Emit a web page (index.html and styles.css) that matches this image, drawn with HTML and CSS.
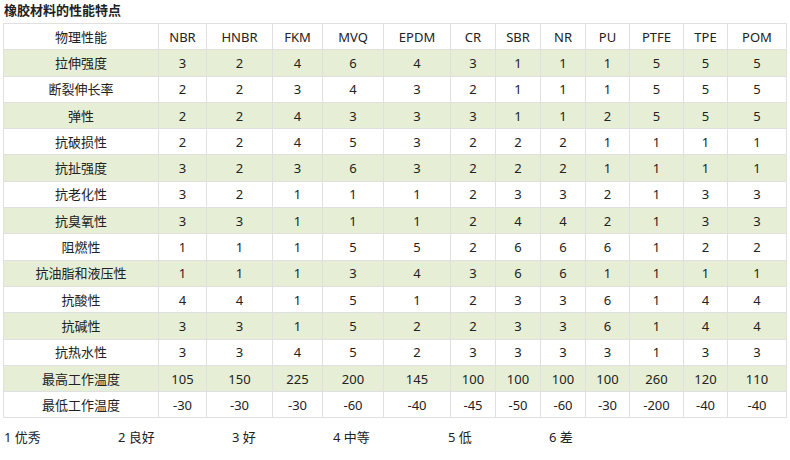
FILE: index.html
```html
<!DOCTYPE html>
<html lang="zh">
<head>
<meta charset="utf-8">
<title>橡胶材料的性能特点</title>
<link rel="stylesheet" href="styles.css">
</head>
<body>
<h1 class="title">橡胶材料的性能特点</h1>
<table class="props">
<colgroup>
<col style="width:155px"><col style="width:48px"><col style="width:66px"><col style="width:50px"><col style="width:61px"><col style="width:67px"><col style="width:45px"><col style="width:45px"><col style="width:45px"><col style="width:44px"><col style="width:54px"><col style="width:44px"><col style="width:59px">
</colgroup>
<thead>
<tr><th>物理性能</th><th>NBR</th><th>HNBR</th><th>FKM</th><th>MVQ</th><th>EPDM</th><th>CR</th><th>SBR</th><th>NR</th><th>PU</th><th>PTFE</th><th>TPE</th><th>POM</th></tr>
</thead>
<tbody>
<tr class="alt"><td>拉伸强度</td><td>3</td><td>2</td><td>4</td><td>6</td><td>4</td><td>3</td><td>1</td><td>1</td><td>1</td><td>5</td><td>5</td><td>5</td></tr>
<tr><td>断裂伸长率</td><td>2</td><td>2</td><td>3</td><td>4</td><td>3</td><td>2</td><td>1</td><td>1</td><td>1</td><td>5</td><td>5</td><td>5</td></tr>
<tr class="alt"><td>弹性</td><td>2</td><td>2</td><td>4</td><td>3</td><td>3</td><td>3</td><td>1</td><td>1</td><td>2</td><td>5</td><td>5</td><td>5</td></tr>
<tr><td>抗破损性</td><td>2</td><td>2</td><td>4</td><td>5</td><td>3</td><td>2</td><td>2</td><td>2</td><td>1</td><td>1</td><td>1</td><td>1</td></tr>
<tr class="alt"><td>抗扯强度</td><td>3</td><td>2</td><td>3</td><td>6</td><td>3</td><td>2</td><td>2</td><td>2</td><td>1</td><td>1</td><td>1</td><td>1</td></tr>
<tr><td>抗老化性</td><td>3</td><td>2</td><td>1</td><td>1</td><td>1</td><td>2</td><td>3</td><td>3</td><td>2</td><td>1</td><td>3</td><td>3</td></tr>
<tr class="alt"><td>抗臭氧性</td><td>3</td><td>3</td><td>1</td><td>1</td><td>1</td><td>2</td><td>4</td><td>4</td><td>2</td><td>1</td><td>3</td><td>3</td></tr>
<tr><td>阻燃性</td><td>1</td><td>1</td><td>1</td><td>5</td><td>5</td><td>2</td><td>6</td><td>6</td><td>6</td><td>1</td><td>2</td><td>2</td></tr>
<tr class="alt"><td>抗油脂和液压性</td><td>1</td><td>1</td><td>1</td><td>3</td><td>4</td><td>3</td><td>6</td><td>6</td><td>1</td><td>1</td><td>1</td><td>1</td></tr>
<tr><td>抗酸性</td><td>4</td><td>4</td><td>1</td><td>5</td><td>1</td><td>2</td><td>3</td><td>3</td><td>6</td><td>1</td><td>4</td><td>4</td></tr>
<tr class="alt"><td>抗碱性</td><td>3</td><td>3</td><td>1</td><td>5</td><td>2</td><td>2</td><td>3</td><td>3</td><td>6</td><td>1</td><td>4</td><td>4</td></tr>
<tr><td>抗热水性</td><td>3</td><td>3</td><td>4</td><td>5</td><td>2</td><td>3</td><td>3</td><td>3</td><td>3</td><td>1</td><td>3</td><td>3</td></tr>
<tr class="alt"><td>最高工作温度</td><td>105</td><td>150</td><td>225</td><td>200</td><td>145</td><td>100</td><td>100</td><td>100</td><td>100</td><td>260</td><td>120</td><td>110</td></tr>
<tr><td>最低工作温度</td><td>-30</td><td>-30</td><td>-30</td><td>-60</td><td>-40</td><td>-45</td><td>-50</td><td>-60</td><td>-30</td><td>-200</td><td>-40</td><td>-40</td></tr>
</tbody>
</table>
<div class="legend">
<span class="w114">1 优秀</span>
<span class="w114">2 良好</span>
<span class="w101">3 好</span>
<span class="w115">4 中等</span>
<span class="w101">5 低</span>
<span>6 差</span>
</div>
</body>
</html>
```
FILE: styles.css
```css
html, body {
  margin: 0;
  padding: 0;
  background: #fff;
}
body {
  padding: 0 0 0 3px;
  font-family: "Noto Sans", "Noto Sans CJK SC", sans-serif;
  font-size: 13px;
  color: #222;
}
.title {
  margin: 0;
  padding: 1px 0 0 1px;
  height: 23px;
  box-sizing: border-box;
  font-size: 13px;
  line-height: 18px;
  font-weight: bold;
  color: #222;
}
.props {
  border-collapse: collapse;
  table-layout: fixed;
  width: 783px;
  border: 1px solid #ddd;
}
.props tr {
  height: 26.3px;
}
.props th, .props td {
  border: 1px solid #e0e0e0;
  padding: 0;
  text-align: center;
  font-weight: normal;
  line-height: 18px;
  white-space: nowrap;
  color: #222;
}
.props tr.alt td {
  background: #e6eed6;
}
.legend {
  display: flex;
  margin-top: 10px;
  padding-left: 1px;
  line-height: 18px;
}
.w114 { width: 114px; }
.w101 { width: 101px; }
.w115 { width: 115px; }
```
